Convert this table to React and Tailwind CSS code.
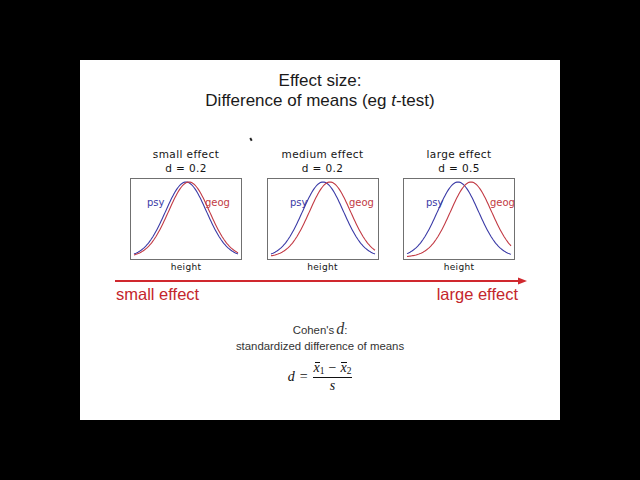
import React from 'react';

const BLUE = '#3a3aa6';
const RED = '#c23a44';

// gaussian curve path across the 112x82 box
const curve = (mu, sigma) => {
  let d = '';
  for (let x = 4; x <= 108; x += 1) {
    const y = 79 - 75 * Math.exp(-((x - mu) * (x - mu)) / (2 * sigma * sigma));
    d += `${x === 4 ? 'M' : 'L'}${x} ${y.toFixed(2)} `;
  }
  return d;
};

const panels = [
  { title: 'small effect', d: 'd = 0.2', blue: 56, red: 59, psy: 17, geog: 75 },
  { title: 'medium effect', d: 'd = 0.2', blue: 56, red: 63, psy: 23, geog: 82 },
  { title: 'large effect', d: 'd = 0.5', blue: 55, red: 68, psy: 23, geog: 87 },
];

const hand = { fontFamily: '"DejaVu Sans", sans-serif' };

const Panel = ({ p }) => (
  <div className="flex w-[112px] flex-col items-center text-[#151515]" style={hand}>
    <div className="text-center text-[10.5px] leading-[14px] tracking-[0.4px]">
      {p.title}
      <br />
      {p.d}
    </div>
    <div className="mt-[3px] h-[82px] w-[112px] border border-[#707070]">
      <svg width="110" height="80" viewBox="1 1 110 80" className="block">
        <path d={curve(p.blue, 20.5)} fill="none" stroke={BLUE} strokeWidth="1.1" />
        <path d={curve(p.red, 20.5)} fill="none" stroke={RED} strokeWidth="1.1" />
        <text x={p.psy} y="28" fontSize="10" fill={BLUE} style={hand}>psy</text>
        <text x={p.geog} y="28" fontSize="10" fill={RED} style={hand}>geog</text>
      </svg>
    </div>
    <div className="mt-[1px] text-[9px] leading-[12px] tracking-[0.3px]">height</div>
  </div>
);

const Bar = ({ children }) => (
  <span className="relative italic">
    {children}
    <span className="absolute left-[1px] right-0 top-[2px] h-[0.8px] bg-[#111]" />
  </span>
);

const App = () => {
  return (
    <div className="flex h-[480px] w-[640px] items-center justify-center bg-black">
      <div
        className="flex h-[360px] w-[480px] flex-col items-center bg-white pt-[11px]"
        style={{ fontFamily: '"Liberation Sans", Arial, sans-serif' }}
      >
        <div className="text-center text-[17px] leading-[20px] text-[#1a1a1a]">
          Effect size:
          <br />
          Difference of means (eg <i>t</i>-test)
        </div>

        <div className="h-[36px] w-full pl-[170px] pt-[27px]">
          <div className="h-[3px] w-[1.5px] rotate-[-30deg] bg-[#222]" />
        </div>

        <div className="flex gap-[24.5px] self-start pl-[50px]">
          {panels.map((p) => (
            <Panel key={p.title} p={p} />
          ))}
        </div>

        <div className="mt-[4px] self-start pl-[35px]">
          <svg width="412" height="8" viewBox="0 0 412 8" className="block">
            <line x1="0" y1="4" x2="405" y2="4" stroke="#d0282e" strokeWidth="2" />
            <polygon points="403,0.5 412,4 403,7.5" fill="#d0282e" />
          </svg>
        </div>

        <div className="flex w-full justify-between pl-[36px] pr-[42px] text-[16.5px] leading-[19px] text-[#c4262c]">
          <span>small effect</span>
          <span>large effect</span>
        </div>

        <div className="mt-[17px] flex items-baseline text-[11.4px] leading-[16px] text-[#333]">
          <span>Cohen's</span>
          <span
            className="ml-[2px] text-[16px] italic"
            style={{ fontFamily: '"Liberation Serif", serif' }}
          >
            d
          </span>
          <span>:</span>
        </div>
        <div className="mt-[1px] text-[11.4px] leading-[14px] text-[#333]">
          standardized difference of means
        </div>

        <div
          className="mt-[7px] flex items-center text-[14px] text-[#111]"
          style={{ fontFamily: '"Liberation Serif", "DejaVu Serif", serif' }}
        >
          <span className="italic">d</span>
          <span className="mx-[5px]">=</span>
          <div className="flex flex-col items-center">
            <div className="px-[1px] leading-[15px]">
              <Bar>x</Bar>
              <span className="relative top-[2px] text-[9.5px]">1</span>
              <span className="mx-[4px]">−</span>
              <Bar>x</Bar>
              <span className="relative top-[2px] text-[9.5px]">2</span>
            </div>
            <div className="h-[0.8px] w-full bg-[#111]" />
            <div className="italic leading-[15px]">s</div>
          </div>
        </div>
      </div>
    </div>
  );
};

export default App;
